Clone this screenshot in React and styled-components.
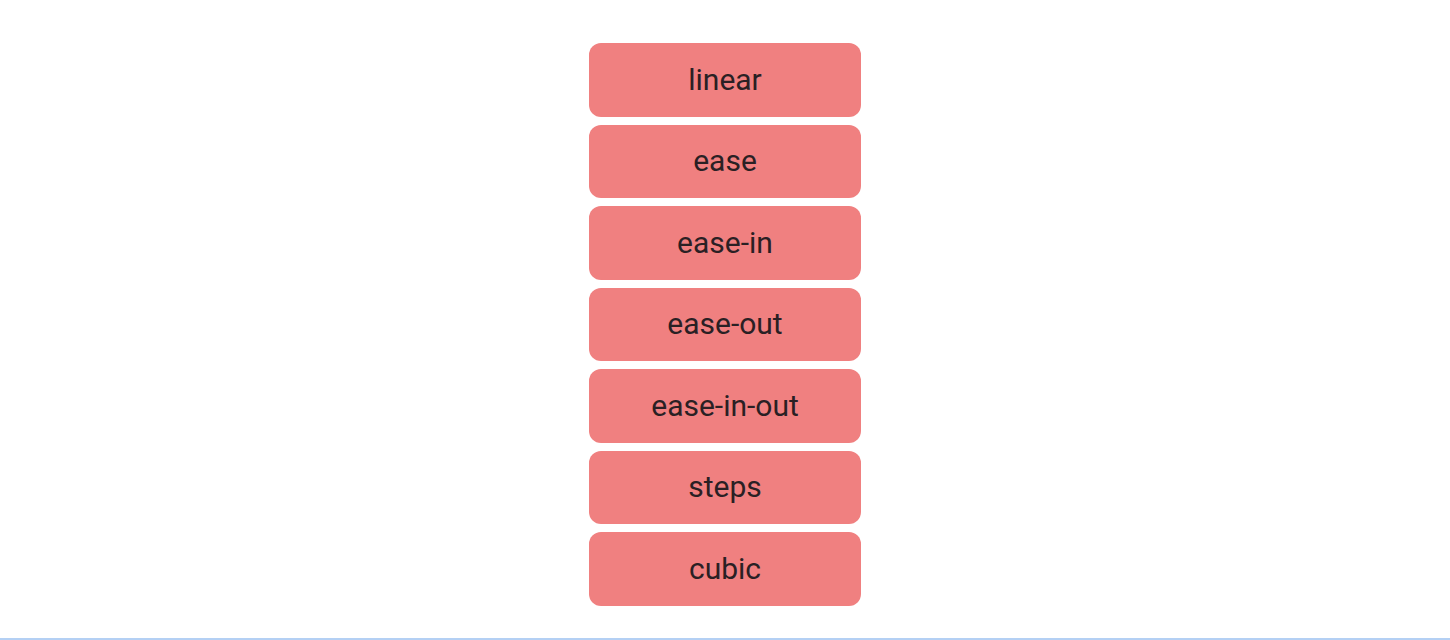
import React from "react";
import styled, { createGlobalStyle } from "styled-components";

const Global = createGlobalStyle`
  html, body { margin: 0; padding: 0; background: #ffffff; }
  body { font-family: Roboto, "Noto Sans", sans-serif; }
`;

const Page = styled.div`
  box-sizing: border-box;
  height: 640px;
  display: flex;
  flex-direction: column;
  align-items: center;
  padding-top: 43px;
  border-bottom: 2px solid #b4d0f4;
`;

const List = styled.div`
  display: flex;
  flex-direction: column;
  gap: 8px;
  width: 272px;
`;

const Button = styled.div`
  box-sizing: border-box;
  height: 73.5px;
  display: flex;
  align-items: center;
  justify-content: center;
  background: #f08080;
  border-radius: 12px;
  color: #2a2024;
  font-family: Roboto, sans-serif;
  font-size: 30px;
  line-height: 1;
`;

const items = ["linear", "ease", "ease-in", "ease-out", "ease-in-out", "steps", "cubic"];

export default function App() {
  return (
    <>
      <Global />
      <Page>
        <List>
          {items.map((t) => (
            <Button key={t}>{t}</Button>
          ))}
        </List>
      </Page>
    </>
  );
}
